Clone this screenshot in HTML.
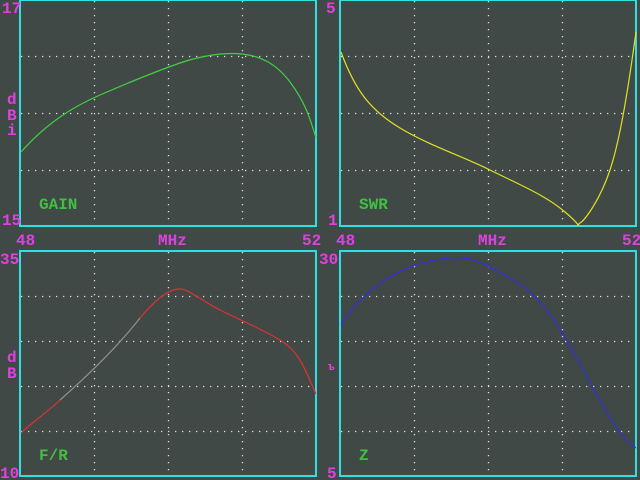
<!DOCTYPE html>
<html><head><style>
html,body{margin:0;padding:0;background:#414947;width:640px;height:480px;overflow:hidden}
svg{display:block}
text{font-family:"Liberation Mono",monospace;font-size:16px;font-weight:bold}
.m{fill:#e040e0}.g{fill:#40c040}
</style></head><body>
<svg width="640" height="480" viewBox="0 0 640 480">
<g fill="none" stroke="#ddd" stroke-width="1.3" stroke-dasharray="1.3 5.7">
<path d="M94.5 1V226M168.5 1V226M242.5 1V226M21 56.5H316M21 113.5H316M21 170.5H316"/>
<path d="M414.5 1V226M488.5 1V226M562.5 1V226M341 56.5H636M341 113.5H636M341 170.5H636"/>
<path d="M94.5 252V476M168.5 252V476M242.5 252V476M21 296.5H316M21 341.5H316M21 386.5H316M21 431.5H316"/>
<path d="M414.5 252V476M488.5 252V476M562.5 252V476M341 296.5H636M341 341.5H636M341 386.5H636M341 431.5H636"/>
</g>
<g fill="none" stroke="#30e0e0" stroke-width="2">
<rect x="20" y="0" width="296" height="226"/>
<rect x="340" y="0" width="296" height="226"/>
<rect x="20" y="251" width="296" height="225"/>
<rect x="340" y="251" width="296" height="225"/>
</g>
<g fill="none" stroke-width="1.2">
<path stroke="#40d040" d="M21 152 C45 125,70 108,100 95 S160 70,180 63 S225 52,242 54 S275 62,290 82 S310 118,316 138"/>
<path stroke="#e0e020" d="M341 52 C355 90,370 110,400 128 S460 155,490 170 S545 195,565 212 S575 226,580 223 S600 200,610 170 S628 90,636 32"/>
<path stroke="#e03030" d="M21 433 C35 420,50 410,60 400"/>
<path stroke="#909090" d="M60 400 C85 378,115 350,140 318"/>
<path stroke="#e03030" d="M140 318 C155 300,168 290,178 289 S200 300,220 310 S260 328,280 340 S305 370,316 394"/>
<path stroke="#3030e0" d="M341 325 C360 295,390 270,430 261 S480 262,510 278 S555 320,575 355 S615 435,636 448"/>
</g>
<text class="m" x="2" y="13">17</text>
<text class="m" x="2" y="225">15</text>
<text class="m" x="7" y="104">d</text>
<text class="m" x="7" y="120">B</text>
<text class="m" x="7" y="135">i</text>
<text class="m" x="16" y="245">48</text>
<text class="m" x="158" y="245">MHz</text>
<text class="m" x="302" y="245">52</text>
<text class="m" x="326" y="13">5</text>
<text class="m" x="328" y="225">1</text>
<text class="m" x="336" y="245">48</text>
<text class="m" x="478" y="245">MHz</text>
<text class="m" x="622" y="245">52</text>
<text class="m" x="0" y="264">35</text>
<text class="m" x="0" y="478">10</text>
<text class="m" x="7" y="362">d</text>
<text class="m" x="7" y="378">B</text>
<text class="m" x="319" y="264">30</text>
<text class="m" x="327" y="478">5</text>
<text class="m" x="328" y="370" style="font-size:11px">ъ</text>
<text class="g" x="39" y="209">GAIN</text>
<text class="g" x="359" y="209">SWR</text>
<text class="g" x="39" y="460">F/R</text>
<text class="g" x="359" y="460">Z</text>
</svg>
</body></html>
